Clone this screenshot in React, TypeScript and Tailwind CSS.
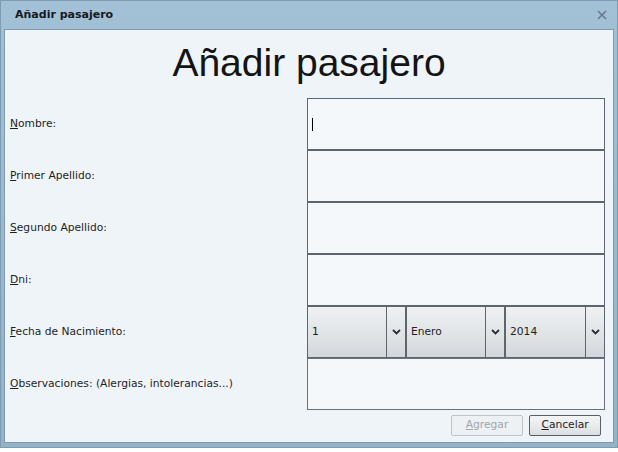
import React from 'react';

const small = { fontFamily: '"DejaVu Sans", Verdana, sans-serif' };
const label = "text-[10.7px] text-[#1e1e1e] flex items-center h-[52px] pl-[5px] pt-px";
const box = "h-[52px] border border-[#5f656c] bg-[#f4f8fb]";

const Chevron: React.FC = () => (
  <svg width="9" height="6" viewBox="0 0 9 6">
    <path d="M1 1 L4.5 4.5 L8 1" fill="none" stroke="#2b2f33" strokeWidth="1.8" />
  </svg>
);

const Select: React.FC<{ value: string; w: string }> = ({ value, w }) => (
  <div className={`${w} h-[52px] flex border border-[#5f656c] bg-gradient-to-b from-[#eef0f2] via-[#e2e5e8] to-[#d3d7db]`}>
    <div className="flex-1 flex items-center pl-[4px] text-[10.7px] text-[#1e1e1e]" style={small}>{value}</div>
    <div className="w-[19px] flex items-center justify-center border-l border-[#5f656c]">
      <Chevron />
    </div>
  </div>
);

const App: React.FC = () => {
  const rows = [
    { first: 'N', rest: 'ombre:' },
    { first: 'P', rest: 'rimer Apellido:' },
    { first: 'S', rest: 'egundo Apellido:' },
    { first: 'D', rest: 'ni:' },
  ];

  return (
    <div className="w-[618px] h-[452px] bg-white" style={{ fontFamily: '"Liberation Sans", Arial, sans-serif' }}>
      <div className="w-[618px] h-[448px] flex flex-col bg-gradient-to-b from-[#a3c1d6] to-[#93b3c9] border border-[#7d9bb2] px-[3px] pb-[4px]">
        {/* title bar */}
        <div className="h-[28px] flex items-center justify-between pl-[11px] pr-[7px]">
          <span className="text-[11px] font-bold text-[#151a1f]" style={small}>Añadir pasajero</span>
          <svg width="10" height="10" viewBox="0 0 10 10">
            <path d="M1 1 L9 9 M9 1 L1 9" stroke="#69778a" strokeWidth="1.6" />
          </svg>
        </div>

        {/* content */}
        <div className="flex-1 bg-[#eff4f9] border border-[#7f9ab0] flex flex-col">
          <div className="h-[68px] pt-[13px] text-center text-[39px] leading-none text-[#141414]">
            Añadir pasajero
          </div>

          <div className="grid grid-cols-[302px_298px]" style={small}>
            {rows.map((r, i) => (
              <React.Fragment key={i}>
                <div className={label}>
                  <span><u>{r.first}</u>{r.rest}</span>
                </div>
                <div
                  className={
                    i === 0
                      ? "h-[52px] border border-[#5f656c] border-t-[#4c6b88] border-l-[#4c6b88] bg-[#f4f8fb] flex items-center pl-[4px]"
                      : box
                  }
                >
                  {i === 0 && <div className="w-px h-[13px] bg-black" />}
                </div>
              </React.Fragment>
            ))}

            <div className={label}>
              <span><u>F</u>echa de Nacimiento:</span>
            </div>
            <div className="flex">
              <Select value="1" w="w-[99px]" />
              <Select value="Enero" w="w-[99px]" />
              <Select value="2014" w="w-[100px]" />
            </div>

            <div className={label}>
              <span><u>O</u>bservaciones: (Alergias, intolerancias...)</span>
            </div>
            <div className="h-[52px] border border-[#6c7279] bg-[#f4f8fb]" />
          </div>

          <div className="flex justify-end gap-[6px] pt-[5px] pr-[12px]" style={small}>
            <button className="w-[72px] h-[21px] rounded-[2px] border border-[#bfc4c9] bg-[#eef1f4] text-[10.7px] text-[#a0a4a8]">
              <u>A</u>gregar
            </button>
            <button className="w-[72px] h-[21px] rounded-[2px] border border-[#5a5f64] bg-gradient-to-b from-[#f4f5f6] to-[#dcdfe2] text-[10.7px] text-[#1e1e1e]">
              <u>C</u>ancelar
            </button>
          </div>
        </div>
      </div>
    </div>
  );
};

export default App;
